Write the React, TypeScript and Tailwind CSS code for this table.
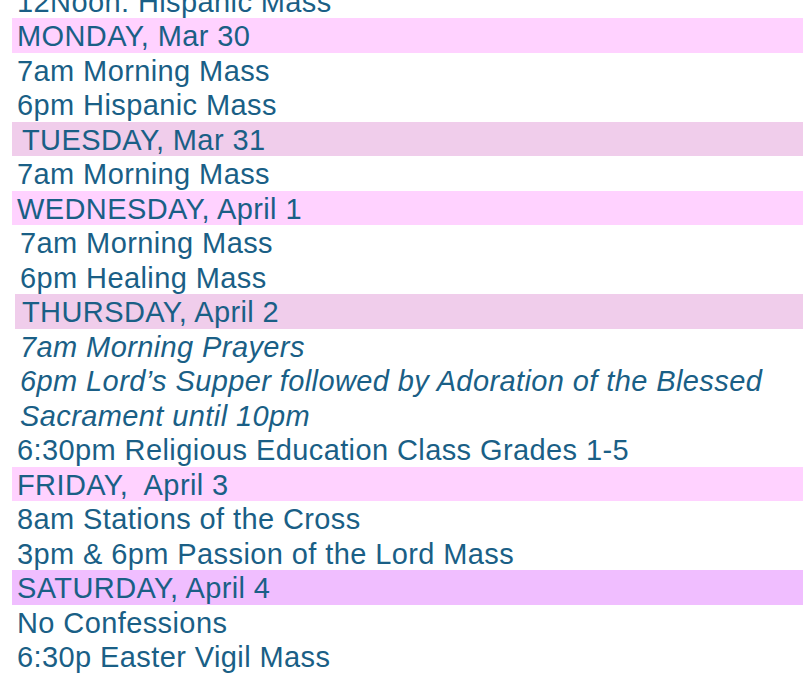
import React from 'react';

type Row = {
  text: string;
  bar?: string;
  barInset?: string;
  indent: string;
  italic?: boolean;
};

// Holy Week schedule, one row per line
const ROWS: Row[] = [
  { text: '12Noon: Hispanic Mass', indent: 'pl-[17px]' },
  { text: 'MONDAY, Mar 30', bar: 'bg-[#ffd2ff]', barInset: 'ml-[12px]', indent: 'pl-[5px]' },
  { text: '7am Morning Mass', indent: 'pl-[17px]' },
  { text: '6pm Hispanic Mass', indent: 'pl-[17px]' },
  { text: 'TUESDAY, Mar 31', bar: 'bg-[#f0cdeb]', barInset: 'ml-[12px]', indent: 'pl-[10px]' },
  { text: '7am Morning Mass', indent: 'pl-[17px]' },
  { text: 'WEDNESDAY, April 1', bar: 'bg-[#ffd2ff]', barInset: 'ml-[12px]', indent: 'pl-[5px]' },
  { text: '7am Morning Mass', indent: 'pl-[20px]' },
  { text: '6pm Healing Mass', indent: 'pl-[20px]' },
  { text: 'THURSDAY, April 2', bar: 'bg-[#f0cdeb]', barInset: 'ml-[15px]', indent: 'pl-[7px]' },
  { text: '7am Morning Prayers', indent: 'pl-[20px]', italic: true },
  { text: '6pm Lord\u2019s Supper followed by Adoration of the Blessed', indent: 'pl-[20px]', italic: true },
  { text: 'Sacrament until 10pm', indent: 'pl-[20px]', italic: true },
  { text: '6:30pm Religious Education Class Grades 1-5', indent: 'pl-[17px]' },
  { text: 'FRIDAY,  April 3', bar: 'bg-[#ffd2ff]', barInset: 'ml-[12px]', indent: 'pl-[5px]' },
  { text: '8am Stations of the Cross', indent: 'pl-[17px]' },
  { text: '3pm & 6pm Passion of the Lord Mass', indent: 'pl-[17px]' },
  { text: 'SATURDAY, April 4', bar: 'bg-[#f0beff]', barInset: 'ml-[12px]', indent: 'pl-[5px]' },
  { text: 'No Confessions', indent: 'pl-[17px]' },
  { text: '6:30p Easter Vigil Mass', indent: 'pl-[17px]' },
];

const App: React.FC = () => {
  return (
    <div className="w-[807px] h-[681px] overflow-hidden bg-white">
      <div
        className="-mt-[16.5px] flex flex-col text-[29px] tracking-[0.4px] text-[#1a5f86]"
        style={{ fontFamily: '"Liberation Sans", Arial, sans-serif' }}
      >
        {ROWS.map((row, i) => (
          <div
            key={i}
            className={`h-[34.5px] leading-[36px] whitespace-pre ${row.italic ? 'italic' : ''} ${
              row.bar ? `${row.bar} ${row.barInset} mr-[4px]` : ''
            } ${row.indent}`}
          >
            {row.text}
          </div>
        ))}
      </div>
    </div>
  );
};

export default App;
